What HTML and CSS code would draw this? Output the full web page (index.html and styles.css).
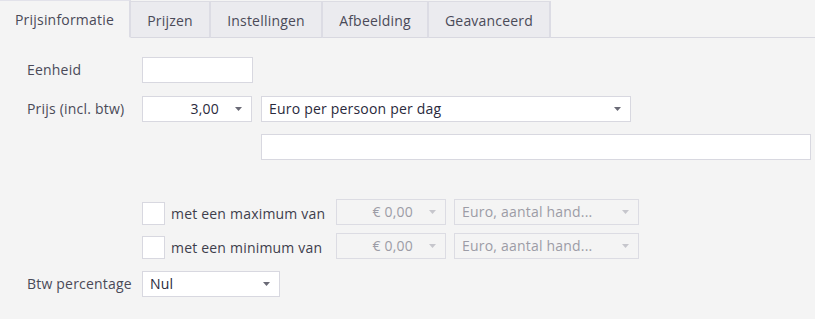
FILE: index.html
```html
<!DOCTYPE html>
<html lang="nl">
<head>
<meta charset="utf-8">
<title>Prijsinformatie</title>
<link rel="stylesheet" href="styles.css">
</head>
<body>
<div class="tabs">
  <div class="tab tab-active t1">Prijsinformatie</div>
  <div class="tab t2">Prijzen</div>
  <div class="tab t3">Instellingen</div>
  <div class="tab t4">Afbeelding</div>
  <div class="tab t5">Geavanceerd</div>
  <div class="tab-rest"></div>
</div>
<div class="form">
  <div class="row r-eenheid">
    <div class="label">Eenheid</div>
    <div class="box w-eenheid"></div>
  </div>
  <div class="row r-prijs">
    <div class="label">Prijs (incl. btw)</div>
    <div class="box w-num num">
      <span class="val">3,00</span>
      <svg class="arrow" width="7" height="4" viewBox="0 0 7 4"><polygon points="0,0 7,0 3.5,4"/></svg>
    </div>
    <div class="box w-unit sel">
      <span class="val">Euro per persoon per dag</span>
      <svg class="arrow" width="7" height="4" viewBox="0 0 7 4"><polygon points="0,0 7,0 3.5,4"/></svg>
    </div>
  </div>
  <div class="row r-extra">
    <div class="box w-extra"></div>
  </div>
  <div class="row r-max">
    <div class="check"></div>
    <div class="check-label">met een maximum van</div>
    <div class="box disabled w-dnum num">
      <span class="val">€ 0,00</span>
      <svg class="arrow" width="7" height="4" viewBox="0 0 7 4"><polygon points="0,0 7,0 3.5,4"/></svg>
    </div>
    <div class="box disabled w-dunit sel">
      <span class="val">Euro, aantal hand...</span>
      <svg class="arrow" width="7" height="4" viewBox="0 0 7 4"><polygon points="0,0 7,0 3.5,4"/></svg>
    </div>
  </div>
  <div class="row r-min">
    <div class="check"></div>
    <div class="check-label">met een minimum van</div>
    <div class="box disabled w-dnum num">
      <span class="val">€ 0,00</span>
      <svg class="arrow" width="7" height="4" viewBox="0 0 7 4"><polygon points="0,0 7,0 3.5,4"/></svg>
    </div>
    <div class="box disabled w-dunit sel">
      <span class="val">Euro, aantal hand...</span>
      <svg class="arrow" width="7" height="4" viewBox="0 0 7 4"><polygon points="0,0 7,0 3.5,4"/></svg>
    </div>
  </div>
  <div class="row r-btw">
    <div class="label">Btw percentage</div>
    <div class="box w-btw sel">
      <span class="val">Nul</span>
      <svg class="arrow" width="7" height="4" viewBox="0 0 7 4"><polygon points="0,0 7,0 3.5,4"/></svg>
    </div>
  </div>
</div>
</body>
</html>
```

FILE: styles.css
```css
html, body {
  margin: 0;
  padding: 0;
}
body {
  width: 815px;
  height: 319px;
  overflow: hidden;
  background: #f4f4f4;
  font-family: "Open Sans", "DejaVu Sans", sans-serif;
  font-size: 14px;
  letter-spacing: 0.2px;
  color: #4a4a58;
}
.tabs {
  display: flex;
  height: 38px;
  box-sizing: border-box;
}
.tab {
  box-sizing: border-box;
  display: flex;
  align-items: center;
  justify-content: center;
  background: #ebebef;
  border-top: 1px solid #dcdce3;
  border-right: 2px solid #dcdce4;
  border-bottom: 1px solid #d8d8e0;
  margin-top: 1px;
  height: 37px;
  color: #4a4a58;
  padding-top: 1px;
}
.tab-active {
  background: #f4f4f4;
  border-top: 1px solid #e2e2ea;
  border-bottom: 1px solid #f4f4f4;
  margin-top: 0;
  height: 38px;
}
.t1 { width: 131px; }
.t2 { width: 80px; }
.t3 { width: 112px; }
.t4 { width: 106px; }
.t5 { width: 122px; }
.tab-rest {
  flex: 1;
  border-bottom: 1px solid #d8d8e0;
}
.form {
  padding: 19px 0 0 27px;
  display: flex;
  flex-direction: column;
}
.row {
  display: flex;
  align-items: center;
  height: 26px;
}
.r-prijs { margin-top: 13px; }
.r-extra { margin-top: 12px; padding-left: 234px; }
.r-max { margin-top: 39px; padding-left: 115px; }
.r-min { margin-top: 8px; padding-left: 115px; }
.r-btw { margin-top: 12px; }
.label {
  width: 115px;
  flex: none;
  padding-bottom: 2px;
  white-space: nowrap;
}
.box {
  box-sizing: border-box;
  height: 26px;
  background: #ffffff;
  border: 1px solid #d8d8e0;
  display: flex;
  align-items: center;
  flex: none;
}
.w-eenheid { width: 111px; }
.w-num { width: 110px; }
.w-unit { width: 370px; margin-left: 9px; }
.w-extra { width: 550px; }
.w-dnum { width: 110px; }
.w-dunit { width: 185px; margin-left: 8px; }
.w-btw { width: 138px; }
.val {
  color: #2a2a3c;
  padding-bottom: 1px;
  white-space: nowrap;
}
.num .val {
  flex: 1;
  text-align: right;
  padding-right: 16px;
}
.num .arrow { margin-right: 9px; }
.sel .val {
  flex: 1;
  padding-left: 7px;
}
.sel .arrow { margin-right: 9px; }
.arrow { fill: #6a6a76; flex: none; }
.disabled {
  background: #f4f4f4;
  border-color: #dcdce3;
}
.disabled .val { color: #9c9ca6; }
.disabled .arrow { fill: #c6c6cc; }
.check {
  box-sizing: border-box;
  width: 23px;
  height: 23px;
  background: #ffffff;
  border: 1px solid #d8d8e0;
  flex: none;
  margin-top: 3px;
}
.check-label {
  width: 165px;
  margin-left: 6px;
  flex: none;
  margin-top: 3px;
  color: #3e3e4c;
  white-space: nowrap;
}
```
